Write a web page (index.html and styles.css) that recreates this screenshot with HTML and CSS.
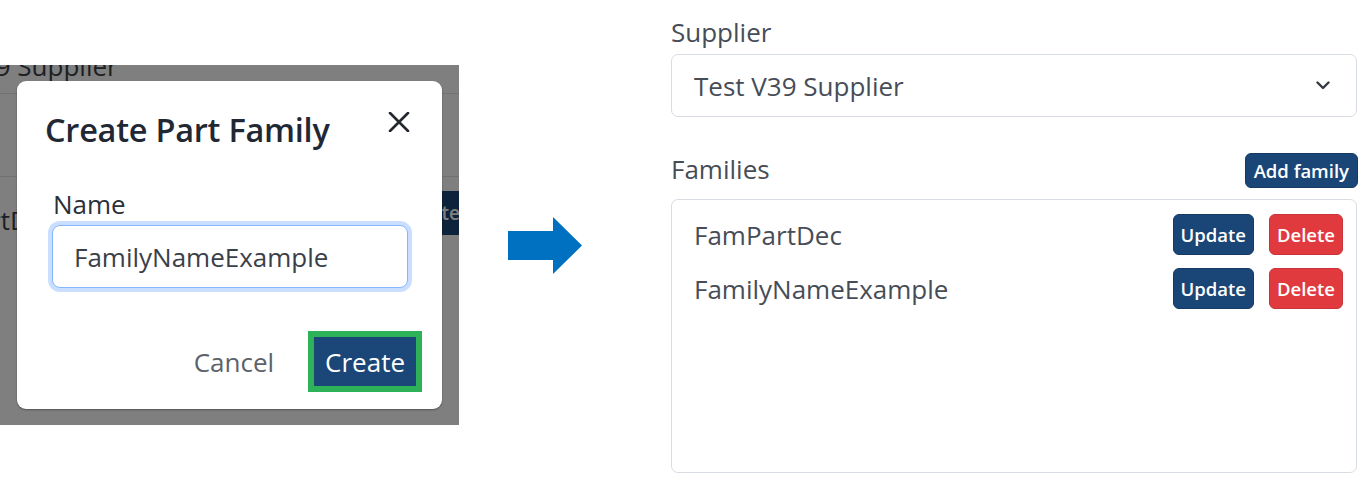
FILE: index.html
```html
<!DOCTYPE html>
<html lang="en">
<head>
<meta charset="utf-8">
<title>Create Part Family</title>
<link rel="stylesheet" href="styles.css">
</head>
<body>
<div class="scene">
  <div class="left-shot">
    <div class="behind">
      <div class="b-select"><span>Test V39 Supplier</span></div>
      <div class="b-list">
        <div class="b-row"><span class="b-name">FamPartDec</span><span class="b-btn">Update</span></div>
      </div>
    </div>
    <div class="backdrop"></div>
    <div class="modal">
      <div class="modal-header">
        <h5 class="modal-title">Create Part Family</h5>
        <span class="close-btn" aria-label="Close">
          <svg width="22" height="20" viewBox="0 0 22 20"><path d="M2 1 L20 19 M20 1 L2 19" stroke="#23272e" stroke-width="2.6" stroke-linecap="round" fill="none"/></svg>
        </span>
      </div>
      <div class="modal-body">
        <label class="name-label">Name</label>
        <input class="name-input" type="text" value="FamilyNameExample">
      </div>
      <div class="modal-footer">
        <button class="btn-cancel">Cancel</button>
        <button class="btn-create">Create</button>
      </div>
    </div>
  </div>

  <div class="arrow">
    <svg width="74" height="57" viewBox="0 0 74 57"><polygon points="0,14 45,14 45,0 74,28.5 45,57 45,43 0,43" fill="#0070c0"/></svg>
  </div>

  <div class="right">
    <div class="field-label">Supplier</div>
    <div class="select">
      <span>Test V39 Supplier</span>
      <svg width="14" height="9" viewBox="0 0 14 9"><path d="M1.5 1.5 L7 7 L12.5 1.5" stroke="#343a40" stroke-width="2.4" fill="none" stroke-linecap="round" stroke-linejoin="round"/></svg>
    </div>
    <div class="fam-head">
      <span class="fam-label">Families</span>
      <button class="btn btn-blue btn-add">Add family</button>
    </div>
    <div class="list">
      <div class="row">
        <span class="item-name">FamPartDec</span>
        <span class="actions"><button class="btn btn-blue">Update</button><button class="btn btn-red">Delete</button></span>
      </div>
      <div class="row">
        <span class="item-name">FamilyNameExample</span>
        <span class="actions"><button class="btn btn-blue">Update</button><button class="btn btn-red">Delete</button></span>
      </div>
    </div>
  </div>
</div>
</body>
</html>
```

FILE: styles.css
```css
html, body {
  margin: 0;
  padding: 0;
}
body {
  width: 1365px;
  height: 490px;
  overflow: hidden;
  background: #ffffff;
  font-family: "Open Sans", "Noto Sans", sans-serif;
}
.scene {
  display: flex;
  align-items: flex-start;
}

/* ---------- left screenshot ---------- */
.left-shot {
  flex: none;
  position: relative;
  overflow: hidden;
  margin-top: 65px;
  width: 459px;
  height: 360px;
  background: #ffffff;
}
.behind {
  margin-left: -115px;
  width: 608px;
  color: #3a3f46;
  font-size: 26px;
}
.b-select {
  margin-top: -34px;
  height: 63px;
  box-sizing: border-box;
  border: 1px solid #dee2e6;
  border-radius: 8px;
  padding: 6px 0 0 22px;
  display: flex;
  align-items: center;
}
.b-list {
  margin-top: 82px;
  height: 300px;
  box-sizing: border-box;
  border: 1px solid #dee2e6;
  border-radius: 8px;
  padding: 14px 24px 0 22px;
}
.b-row {
  display: flex;
  justify-content: space-between;
  align-items: flex-start;
  height: 44px;
}
.b-name {
  margin-top: 12px;
  line-height: 34px;
}
.b-btn {
  height: 44px;
  padding: 0 8px;
  display: flex;
  align-items: center;
  background: #1a4677;
  color: #ffffff;
  font-weight: 600;
  font-size: 19px;
  border-radius: 5px;
}
.backdrop {
  position: absolute;
  inset: 0;
  background: rgba(0, 0, 0, 0.5);
}
.modal {
  position: absolute;
  left: 17px;
  top: 16px;
  width: 425px;
  height: 328px;
  box-sizing: border-box;
  background: #ffffff;
  border-radius: 9px;
  box-shadow: 0 1px 2px rgba(0, 0, 0, 0.35);
}
.modal-header {
  display: flex;
  justify-content: space-between;
  align-items: flex-start;
  padding: 29px 32px 0 28px;
}
.modal-title {
  margin: 0;
  font-size: 32.5px;
  line-height: 40px;
  font-weight: 600;
  letter-spacing: -0.25px;
  color: #212834;
}
.close-btn {
  display: block;
  margin-top: 2px;
  width: 22px;
  height: 20px;
}
.close-btn svg {
  display: block;
}
.modal-body {
  padding: 37px 34px 0 35px;
}
.name-label {
  display: block;
  font-size: 26px;
  line-height: 34px;
  margin: 0 0 4px 1px;
  color: #2b3038;
}
.name-input {
  display: block;
  width: 356px;
  height: 63px;
  box-sizing: border-box;
  margin: 0;
  padding: 0 0 0 21px;
  font-family: "Open Sans", "Noto Sans", sans-serif;
  font-size: 26px;
  color: #3b4048;
  background: #ffffff;
  border: 1.5px solid #86b7fe;
  border-radius: 8px;
  box-shadow: 0 0 0 4px rgba(13, 110, 253, 0.22);
  outline: none;
}
.modal-footer {
  display: flex;
  justify-content: flex-end;
  align-items: center;
  gap: 20px;
  padding: 49px 26px 0 0;
}
.btn-cancel {
  font-family: "Open Sans", "Noto Sans", sans-serif;
  font-size: 26px;
  color: #5c626a;
  background: transparent;
  border: none;
  padding: 0 20px;
  height: 49px;
}
.btn-create {
  font-family: "Open Sans", "Noto Sans", sans-serif;
  font-size: 26px;
  color: #ffffff;
  background: #1a4678;
  border: none;
  height: 49px;
  padding: 0 11px;
  outline: 6px solid #2db159;
}

/* ---------- arrow ---------- */
.arrow {
  flex: none;
  margin: 217px 0 0 49px;
  width: 74px;
  height: 57px;
}
.arrow svg {
  display: block;
}

/* ---------- right panel ---------- */
.right {
  flex: none;
  margin-left: 89px;
  width: 686px;
  padding-top: 14px;
  color: #474d57;
}
.field-label {
  font-size: 26px;
  line-height: 36px;
  margin-bottom: 4px;
}
.select {
  height: 63px;
  box-sizing: border-box;
  border: 1px solid #d7dde3;
  border-radius: 7px;
  display: flex;
  align-items: center;
  justify-content: space-between;
  padding: 0 26px 0 22px;
  font-size: 26px;
}
.select svg {
  display: block;
}
.fam-head {
  margin-top: 35px;
  height: 36px;
  display: flex;
  justify-content: space-between;
  align-items: center;
}
.fam-label {
  font-size: 26px;
  line-height: 36px;
  margin-top: -3px;
}
.list {
  margin-top: 11px;
  height: 274px;
  box-sizing: border-box;
  border: 1px solid #d7dde3;
  border-radius: 7px;
  padding: 14px 13px 0 22px;
  display: flex;
  flex-direction: column;
  gap: 13px;
}
.row {
  display: flex;
  justify-content: space-between;
  align-items: center;
  height: 41px;
}
.item-name {
  font-size: 26px;
  line-height: 36px;
}
.actions {
  display: flex;
  gap: 15px;
}
.btn {
  font-family: "Open Sans", "Noto Sans", sans-serif;
  font-weight: 600;
  font-size: 18.5px;
  color: #ffffff;
  height: 41px;
  box-sizing: border-box;
  padding: 0 7px;
  border-radius: 6px;
  display: inline-flex;
  align-items: center;
  margin: 0;
}
.btn-blue {
  background: #1a4677;
  border: 1px solid #153a63;
}
.btn-red {
  background: #e03a3f;
  border: 1px solid #c9343a;
}
.btn-add {
  height: 35px;
  padding: 0 8px;
  margin-right: -1px;
}
```
